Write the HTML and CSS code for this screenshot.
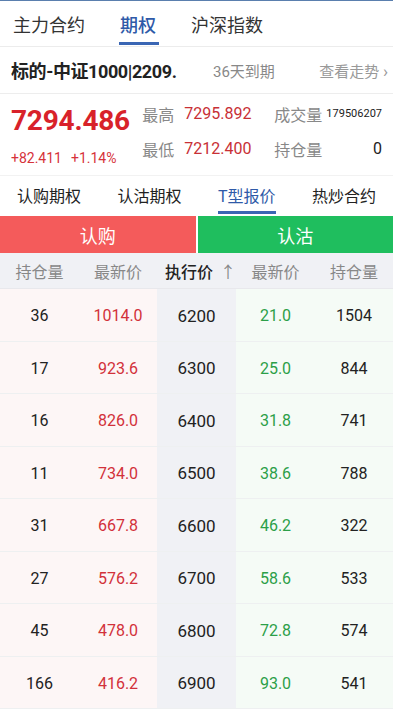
FILE: index.html
```html
<!DOCTYPE html>
<html lang="zh">
<head>
<meta charset="utf-8">
<link rel="stylesheet" href="styles.css">
</head>
<body>
<div class="page">
  <div class="topline"></div>
  <nav class="maintabs">
    <span class="mt">主力合约</span>
    <span class="mt active">期权</span>
    <span class="mt">沪深指数</span>
  </nav>
  <div class="under">
    <span class="uname">标的-中证1000|2209.</span>
    <span class="days">36天到期</span>
    <span class="trend">查看走势 <span class="chev">›</span></span>
  </div>
  <div class="quote">
    <div class="qleft">
      <div class="bigprice">7294.486</div>
      <div class="chg"><span>+82.411</span><span>+1.14%</span></div>
    </div>
    <div class="qgrid">
      <span class="ql">最高</span><span class="qv red">7295.892</span>
      <span class="ql">成交量</span><span class="qv small">179506207</span>
      <span class="ql">最低</span><span class="qv red">7212.400</span>
      <span class="ql">持仓量</span><span class="qv right">0</span>
    </div>
  </div>
  <nav class="subtabs">
    <span class="st">认购期权</span>
    <span class="st">认沽期权</span>
    <span class="st active">T型报价</span>
    <span class="st">热炒合约</span>
  </nav>
  <div class="sides">
    <div class="call">认购</div>
    <div class="put">认沽</div>
  </div>
  <div class="thead">
    <span>持仓量</span><span>最新价</span><span class="strikeh">执行价 <span class="arrow">↑</span></span><span>最新价</span><span>持仓量</span>
  </div>
  <div class="tbody">
    <div class="row"><span class="c l">36</span><span class="c l red">1014.0</span><span class="c s">6200</span><span class="c r green">21.0</span><span class="c r">1504</span></div>
    <div class="row"><span class="c l">17</span><span class="c l red">923.6</span><span class="c s">6300</span><span class="c r green">25.0</span><span class="c r">844</span></div>
    <div class="row"><span class="c l">16</span><span class="c l red">826.0</span><span class="c s">6400</span><span class="c r green">31.8</span><span class="c r">741</span></div>
    <div class="row"><span class="c l">11</span><span class="c l red">734.0</span><span class="c s">6500</span><span class="c r green">38.6</span><span class="c r">788</span></div>
    <div class="row"><span class="c l">31</span><span class="c l red">667.8</span><span class="c s">6600</span><span class="c r green">46.2</span><span class="c r">322</span></div>
    <div class="row"><span class="c l">27</span><span class="c l red">576.2</span><span class="c s">6700</span><span class="c r green">58.6</span><span class="c r">533</span></div>
    <div class="row"><span class="c l">45</span><span class="c l red">478.0</span><span class="c s">6800</span><span class="c r green">72.8</span><span class="c r">574</span></div>
    <div class="row"><span class="c l">166</span><span class="c l red">416.2</span><span class="c s">6900</span><span class="c r green">93.0</span><span class="c r">541</span></div>
  </div>
</div>
</body>
</html>
```
FILE: styles.css
```css
* { box-sizing: border-box; margin: 0; padding: 0; }
html, body { width: 393px; height: 709px; overflow: hidden; background: #fff; }
body { font-family: Roboto, "Noto Sans CJK SC", sans-serif; color: #222; }
.page { width: 393px; }
.topline { height: 1px; background: #5a7fae; }
.maintabs { display: flex; height: 46px; align-items: stretch; padding-left: 13px; border-bottom: 1px solid #ececec; }
.mt { font-size: 18px; color: #333; display: flex; align-items: center; margin-right: 35px; position: relative; padding-top: 1px; }
.mt.active { color: #2f5aa8; font-weight: 500; margin-right: 35px; }
.mt.active::after { content: ""; position: absolute; left: -1px; right: -3px; bottom: 1px; height: 3px; background: #3a66b4; }
.under { display: flex; align-items: center; height: 47px; padding: 0 5px 0 11px; border-bottom: 1px solid #ededed; }
.uname { font-size: 18px; font-weight: 700; color: #222; width: 185px; white-space: nowrap; overflow: hidden; letter-spacing: -0.4px; }
.days { font-size: 15px; color: #888; margin-left: 17px; }
.trend { font-size: 15px; color: #999; margin-left: auto; }
.chev { font-size: 17px; }
.quote { display: flex; height: 82px; border-bottom: 1px solid #f2f2f2; }
.qleft { width: 143px; padding-left: 11px; padding-top: 9px; }
.bigprice { font-size: 28px; font-weight: 700; color: #d8222a; line-height: 36px; letter-spacing: -0.2px; }
.chg { font-size: 14px; color: #d6323a; display: flex; gap: 9px; margin-top: 11px; }
.qgrid { flex: 1; display: grid; grid-template-columns: 42px 90px 52px 1fr; grid-template-rows: 35px 35px; padding-top: 2px; padding-right: 11px; align-items: center; }
.ql { font-size: 16px; color: #888; }
.qv { font-size: 16px; }
.qv.red { color: #c83036; }
.qv.small { font-size: 11px; color: #222; }
.qv.right { text-align: right; color: #222; }
.subtabs { display: flex; height: 40px; align-items: stretch; justify-content: space-between; padding: 0 17px; }
.st { font-size: 16px; color: #222; display: flex; align-items: center; position: relative; padding-bottom: 2px; }
.st.active { color: #2f5aa8; }
.st.active::after { content: ""; position: absolute; left: 0; right: 0; bottom: 2px; height: 3px; background: #3a66b4; }
.sides { display: flex; height: 37px; gap: 2px; }
.call, .put { flex: 1; display: flex; align-items: center; justify-content: center; color: #fff; font-size: 18px; }
.call { background: #f45b5b; }
.put { background: #1fbe5e; }
.thead { display: grid; grid-template-columns: 79px 78px 79px 79px 1fr; height: 36px; background: #f0f1f5; align-items: center; font-size: 16px; color: #888; text-align: center; border-bottom: 1px solid #e8e8ec; }
.strikeh { color: #222; font-weight: 500; padding-left: 8px; white-space: nowrap; }
.arrow { color: #888; font-weight: 400; margin-left: 3px; }
.row { display: grid; grid-template-columns: 79px 78px 79px 79px 1fr; height: 52.5px; border-bottom: 1px solid #eef0f1; }
.c { display: flex; align-items: center; justify-content: center; font-size: 16px; color: #222; padding-top: 2px; }
.c.s { font-size: 17px; }
.c.l { background: #fdf6f6; }
.c.r { background: #f5fbf6; }
.c.s { background: #f0f1f5; }
.red { color: #d2313a; }
.green { color: #2c9f48; }
.c.red { color: #d2313a; }
.c.green { color: #2c9f48; }
```
